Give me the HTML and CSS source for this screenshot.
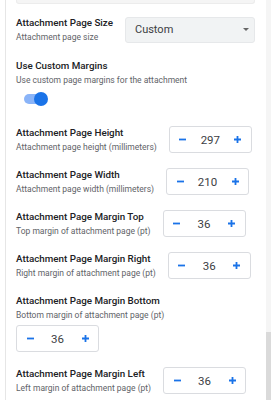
FILE: index.html
```html
<!DOCTYPE html>
<html lang="en">
<head>
    <meta charset="UTF-8">
    <meta name="viewport" content="width=device-width, initial-scale=1.0">
    <title>Attachment settings</title>
    <link rel="stylesheet" href="styles.css">
</head>
<body>
    <div class="page">
        <div class="panel">
            <div class="prev-field"></div>

            <div class="setting first">
                <div class="label">
                    <div class="title">Attachment Page Size</div>
                    <div class="desc">Attachment page size</div>
                </div>
                <div class="select">
                    <span>Custom</span>
                    <span class="caret"></span>
                </div>
            </div>

            <div class="setting block">
                <div class="label">
                    <div class="title">Use Custom Margins</div>
                    <div class="desc">Use custom page margins for the attachment</div>
                </div>
                <div class="toggle on"><span class="knob"></span></div>
            </div>

            <div class="setting">
                <div class="label">
                    <div class="title">Attachment Page Height</div>
                    <div class="desc">Attachment page height (millimeters)</div>
                </div>
                <div class="stepper">
                    <button type="button" class="step"><svg width="9" height="9" viewBox="0 0 9 9"><path d="M1 4.5h7"/></svg></button>
                    <span class="value">297</span>
                    <button type="button" class="step"><svg width="9" height="9" viewBox="0 0 9 9"><path d="M1 4.5h7M4.5 1v7"/></svg></button>
                </div>
            </div>

            <div class="setting">
                <div class="label">
                    <div class="title">Attachment Page Width</div>
                    <div class="desc">Attachment page width (millimeters)</div>
                </div>
                <div class="stepper">
                    <button type="button" class="step"><svg width="9" height="9" viewBox="0 0 9 9"><path d="M1 4.5h7"/></svg></button>
                    <span class="value">210</span>
                    <button type="button" class="step"><svg width="9" height="9" viewBox="0 0 9 9"><path d="M1 4.5h7M4.5 1v7"/></svg></button>
                </div>
            </div>

            <div class="setting">
                <div class="label">
                    <div class="title">Attachment Page Margin Top</div>
                    <div class="desc">Top margin of attachment page (pt)</div>
                </div>
                <div class="stepper">
                    <button type="button" class="step"><svg width="9" height="9" viewBox="0 0 9 9"><path d="M1 4.5h7"/></svg></button>
                    <span class="value">36</span>
                    <button type="button" class="step"><svg width="9" height="9" viewBox="0 0 9 9"><path d="M1 4.5h7M4.5 1v7"/></svg></button>
                </div>
            </div>

            <div class="setting">
                <div class="label">
                    <div class="title">Attachment Page Margin Right</div>
                    <div class="desc">Right margin of attachment page (pt)</div>
                </div>
                <div class="stepper">
                    <button type="button" class="step"><svg width="9" height="9" viewBox="0 0 9 9"><path d="M1 4.5h7"/></svg></button>
                    <span class="value">36</span>
                    <button type="button" class="step"><svg width="9" height="9" viewBox="0 0 9 9"><path d="M1 4.5h7M4.5 1v7"/></svg></button>
                </div>
            </div>

            <div class="setting">
                <div class="label">
                    <div class="title">Attachment Page Margin Bottom</div>
                    <div class="desc">Bottom margin of attachment page (pt)</div>
                </div>
                <div class="stepper">
                    <button type="button" class="step"><svg width="9" height="9" viewBox="0 0 9 9"><path d="M1 4.5h7"/></svg></button>
                    <span class="value">36</span>
                    <button type="button" class="step"><svg width="9" height="9" viewBox="0 0 9 9"><path d="M1 4.5h7M4.5 1v7"/></svg></button>
                </div>
            </div>

            <div class="setting">
                <div class="label">
                    <div class="title">Attachment Page Margin Left</div>
                    <div class="desc">Left margin of attachment page (pt)</div>
                </div>
                <div class="stepper">
                    <button type="button" class="step"><svg width="9" height="9" viewBox="0 0 9 9"><path d="M1 4.5h7"/></svg></button>
                    <span class="value">36</span>
                    <button type="button" class="step"><svg width="9" height="9" viewBox="0 0 9 9"><path d="M1 4.5h7M4.5 1v7"/></svg></button>
                </div>
            </div>
        </div>
        <div class="scrollbar"><div class="thumb"></div></div>
    </div>
</body>
</html>
```

FILE: styles.css
```css
/* base */
body {
    margin: 0;
    font-family: Roboto, "Liberation Sans", sans-serif;
    color: #202124;
    background: #fff;
}
.page {
    display: flex;
    height: 400px;
    overflow: hidden;
}
.panel {
    flex: 1;
    margin-left: 5px;
    padding: 0 11px 0 10px;
    border-left: 1px solid #e6e6e6;
}
.prev-field {
    height: 3px;
    margin-bottom: 12px;
    background: #f5f5f5;
    border: 1px solid #ececec;
    border-top: none;
    border-radius: 0 0 3px 3px;
}

/* rows */
.setting {
    display: flex;
    flex-wrap: wrap;
    align-items: center;
    column-gap: 12px;
    row-gap: 4px;
    margin-bottom: 15px;
}
.setting.first {
    margin-bottom: 16px;
}
.setting.block {
    display: block;
    margin-bottom: 22px;
}
.title {
    font-size: 9.8px;
    font-weight: 500;
    line-height: 14px;
    margin-bottom: 1px;
}
.desc {
    font-size: 8.5px;
    line-height: 12px;
    color: #5f6368;
}

/* select */
.select {
    flex: 1;
    display: flex;
    align-items: center;
    justify-content: space-between;
    height: 24px;
    padding: 0 5px 0 9px;
    background: #f1f3f4;
    border: 1px solid #e6e8ea;
    border-radius: 3px;
    font-size: 11px;
    color: #3c4043;
}
.caret {
    width: 0;
    height: 0;
    border-left: 3px solid transparent;
    border-right: 3px solid transparent;
    border-top: 3px solid #666;
}

/* toggle */
.toggle {
    position: relative;
    width: 22px;
    height: 10px;
    margin: 8px 0 0 8px;
    border-radius: 5px;
    background: #8ab4f8;
}
.toggle .knob {
    position: absolute;
    top: -2px;
    right: -2px;
    width: 14px;
    height: 14px;
    border-radius: 50%;
    background: #1a73e8;
}

/* number stepper */
.stepper {
    display: grid;
    grid-template-columns: 26px 1fr 26px;
    align-items: center;
    width: 81px;
    height: 25px;
    border: 1px solid #dadce0;
    border-radius: 3px;
    background: #fff;
}
.step {
    display: flex;
    align-items: center;
    justify-content: center;
    height: 100%;
    padding: 0;
    background: none;
    border: none;
    cursor: pointer;
}
.step svg path {
    stroke: #1a73e8;
    stroke-width: 1.8;
    fill: none;
}
.value {
    text-align: center;
    font-size: 11.5px;
    color: #3c4043;
}

/* scrollbar */
.scrollbar {
    width: 5px;
    background: #f5f5f5;
    display: flex;
    flex-direction: column;
}
.thumb {
    margin-top: 332px;
    flex: 1;
    background: #dadada;
}
```
